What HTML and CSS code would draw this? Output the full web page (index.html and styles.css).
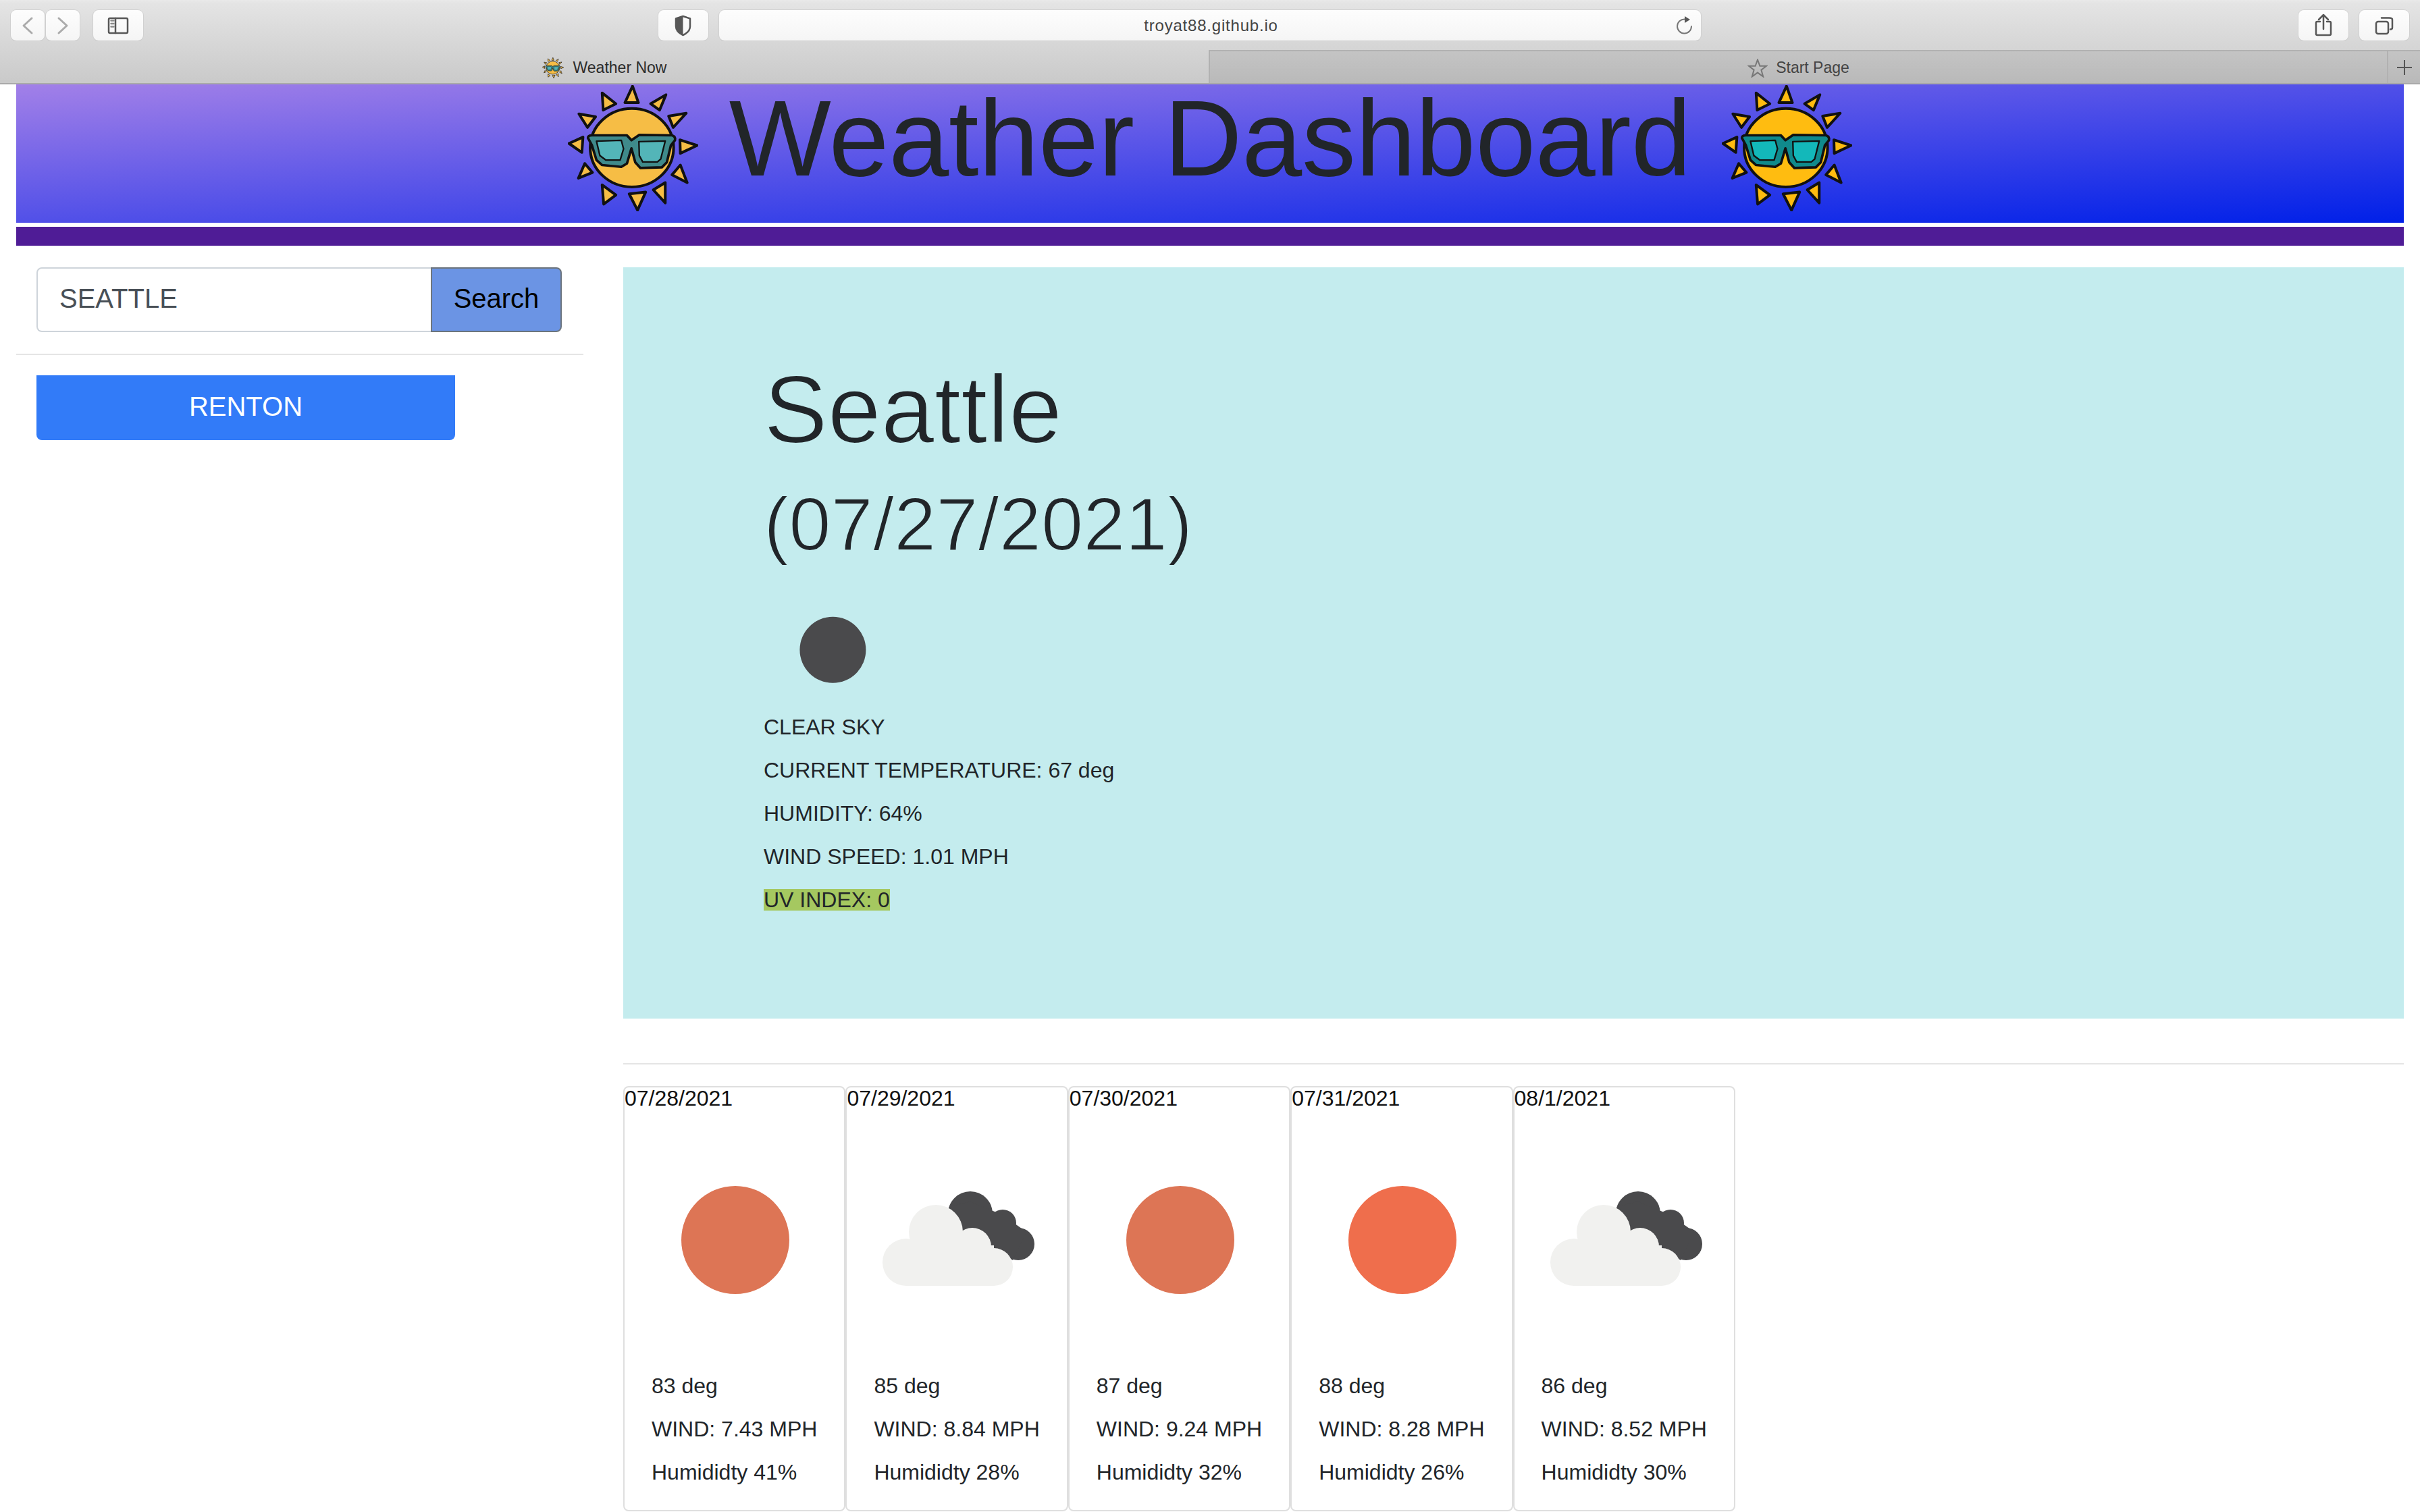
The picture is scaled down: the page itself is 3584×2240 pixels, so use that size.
FILE: index.html
```html
<!DOCTYPE html>
<html lang="en">
<head>
<meta charset="utf-8">
<title>Weather Now</title>
<link rel="stylesheet" href="styles.css">
</head>
<body>
<svg class="defs" xmlns="http://www.w3.org/2000/svg">
  <symbol id="sun" viewBox="63 17 578 560">
    <g class="sun-rays">
      <path d="M350 22L376 95L316 95Z"/>
      <path d="M498 60L470 128L430 100Z"/>
      <path d="M588 142L530 205L510 155Z"/>
      <path d="M636 285L562 320L560 260Z"/>
      <path d="M562 372L592 450L525 415Z"/>
      <path d="M495 450L495 540L442 482Z"/>
      <path d="M372 572L335 500L408 492Z"/>
      <path d="M215 460L276 505L222 545Z"/>
      <path d="M138 365L172 405L110 430Z"/>
      <path d="M68 276L130 248L125 316Z"/>
      <path d="M112 145L186 158L150 205Z"/>
      <path d="M215 52L276 100L220 128Z"/>
      <ellipse cx="347" cy="295" rx="185" ry="174"/>
    </g>
    <path class="sun-frame" d="M152 252Q152 240 170 240L325 240L345 262L380 238L525 240Q542 245 538 262L520 285L502 360L480 382L385 385L362 360L345 298L325 365L300 380L215 372L190 350L170 285Z"/>
    <path class="sun-lens" d="M190 266L300 262L310 300L295 350L232 350L205 330Z"/>
    <path class="sun-lens" d="M378 268L495 265L475 345L460 358L395 358L380 330Z"/>
  </symbol>
  <symbol id="clear" viewBox="4 0 325 220">
    <circle cx="168" cy="117" r="80"/>
  </symbol>
  <symbol id="cloudy" viewBox="4 0 325 220">
    <g class="cloud-back">
      <circle cx="187" cy="78" r="33"/>
      <circle cx="235" cy="92" r="20"/>
      <circle cx="258" cy="123" r="24"/>
      <path d="M155 68L187 60L235 80L270 105L250 147L218 128L178 103Z"/>
    </g>
    <g class="cloud-front">
      <circle cx="92" cy="150" r="35"/>
      <circle cx="136" cy="105" r="40"/>
      <circle cx="190" cy="127" r="28"/>
      <circle cx="222" cy="157" r="28"/>
      <rect x="92" y="125" width="130" height="60"/>
    </g>
  </symbol>
</svg>

<div class="chrome">
  <div class="toolbar">
    <div class="tool tool-nav">
      <svg viewBox="0 0 50 45" class="tool-icon"><path class="ic-faint" d="M31 12L19 23L31 34"/></svg>
    </div>
    <div class="tool tool-nav tool-next">
      <svg viewBox="0 0 50 45" class="tool-icon"><path class="ic-faint" d="M19 12L31 23L19 34"/></svg>
    </div>
    <div class="tool tool-wide tool-sidebar">
      <svg viewBox="0 0 74 45" class="tool-icon">
        <rect class="ic" x="23" y="12" width="28" height="22" rx="2"/>
        <path class="ic" d="M33 12V34"/>
        <path class="ic-thin" d="M26.5 15.5H30.5M26.5 20H30.5M26.5 24.500H30.5"/>
      </svg>
    </div>
    <div class="tool tool-wide tool-shield">
      <svg viewBox="0 0 74 45" class="tool-icon">
        <path class="ic-fill" d="M36.500 9L26 12.500V24C26 31 31 34.500 36.500 37Z"/>
        <path class="ic" d="M36.500 9L47 12.500V24C47 31 42 34.500 36.500 37C31 34.500 26 31 26 24V12.500Z"/>
      </svg>
    </div>
    <div class="address">
      <span></span>
      <span class="address-text">troyat88.github.io</span>
      <svg viewBox="0 0 40 45" class="reload">
        <path class="ic-reload" d="M21 13.500A10.500 10.500 0 1 0 31 24"/>
        <path class="ic-fill" d="M21 9L29 14L21 19Z"/>
      </svg>
    </div>
    <div class="tool tool-wide tool-share">
      <svg viewBox="0 0 74 45" class="tool-icon">
        <path class="ic" d="M32 17H28Q26 17 26 19V35Q26 37 28 37H46Q48 37 48 35V19Q48 17 46 17H42"/>
        <path class="ic" d="M37 28V7M30 14L37 7L44 14"/>
      </svg>
    </div>
    <div class="tool tool-wide tool-tabs">
      <svg viewBox="0 0 74 45" class="tool-icon">
        <rect class="ic" x="25" y="17" width="18" height="18" rx="3"/>
        <path class="ic" d="M33 11.500H44Q49 11.500 49 14V26Q49 28.500 46 28.500"/>
      </svg>
    </div>
  </div>
  <div class="tabs">
    <div class="tab tab-active">
      <svg class="tab-favicon sun-muted"><use href="#sun"/></svg>
      <span>Weather Now</span>
    </div>
    <div class="tab tab-idle">
      <svg viewBox="0 0 30 28" class="tab-star"><path d="M15 1.500L18.400 10.800H28L20.400 16.600L23.200 26.500L15 20.600L6.800 26.500L9.600 16.600L2 10.800H11.600Z"/></svg>
      <span>Start Page</span>
    </div>
    <div class="tab-add">
      <svg viewBox="0 0 24 24" class="tab-plus"><path d="M12 1V23M1 12H23"/></svg>
    </div>
  </div>
</div>

<div class="page">
  <header class="banner">
    <svg class="banner-sun sun-muted"><use href="#sun"/></svg>
    <h1 class="banner-title">Weather Dashboard</h1>
    <svg class="banner-sun sun-bright"><use href="#sun"/></svg>
  </header>
  <div class="rule-bar"></div>

  <div class="layout">
    <aside class="sidebar">
      <form class="search">
        <input class="search-input" type="text" value="SEATTLE" aria-label="City">
        <button class="search-btn" type="button">Search</button>
      </form>
      <hr class="divider">
      <button class="city-btn" type="button">RENTON</button>
    </aside>

    <main class="content">
      <section class="today">
        <h2 class="today-city">Seattle</h2>
        <p class="today-date">(07/27/2021)</p>
        <svg class="today-icon"><use href="#clear"/></svg>
        <p class="line">CLEAR SKY</p>
        <p class="line">CURRENT TEMPERATURE: 67 deg</p>
        <p class="line">HUMIDITY: 64%</p>
        <p class="line">WIND SPEED: 1.01 MPH</p>
        <p class="line"><span class="uv">UV INDEX: 0</span></p>
      </section>
      <hr class="divider divider-wide">
      <div class="forecast">
        <article class="card">
          <div class="card-date">07/28/2021</div>
          <svg class="card-icon sun-a"><use href="#clear"/></svg>
          <div class="card-body">
            <p class="line">83 deg</p>
            <p class="line">WIND: 7.43 MPH</p>
            <p class="line">Humididty 41%</p>
          </div>
        </article>
        <article class="card">
          <div class="card-date">07/29/2021</div>
          <svg class="card-icon"><use href="#cloudy"/></svg>
          <div class="card-body">
            <p class="line">85 deg</p>
            <p class="line">WIND: 8.84 MPH</p>
            <p class="line">Humididty 28%</p>
          </div>
        </article>
        <article class="card">
          <div class="card-date">07/30/2021</div>
          <svg class="card-icon sun-a"><use href="#clear"/></svg>
          <div class="card-body">
            <p class="line">87 deg</p>
            <p class="line">WIND: 9.24 MPH</p>
            <p class="line">Humididty 32%</p>
          </div>
        </article>
        <article class="card">
          <div class="card-date">07/31/2021</div>
          <svg class="card-icon sun-b"><use href="#clear"/></svg>
          <div class="card-body">
            <p class="line">88 deg</p>
            <p class="line">WIND: 8.28 MPH</p>
            <p class="line">Humididty 26%</p>
          </div>
        </article>
        <article class="card">
          <div class="card-date">08/1/2021</div>
          <svg class="card-icon"><use href="#cloudy"/></svg>
          <div class="card-body">
            <p class="line">86 deg</p>
            <p class="line">WIND: 8.52 MPH</p>
            <p class="line">Humididty 30%</p>
          </div>
        </article>
      </div>
    </main>
  </div>
</div>
</body>
</html>
```
FILE: styles.css
```css
* { box-sizing: border-box; }
html, body { margin: 0; padding: 0; height: 2240px; overflow: hidden; background: #fff; }
body { font-family: "Liberation Sans", Arial, sans-serif; font-size: 32px; color: #212529; }
.defs { display: none; }

/* Browser chrome */
.chrome {
  height: 125px;
  background: linear-gradient(180deg, #e9e9e9 0, #e4e4e4 4%, #c9c9c9 100%);
  box-shadow: inset 0 -2px 0 #a9a9a9;
}
.toolbar { height: 74px; padding: 15px 16px 0; display: flex; align-items: flex-start; }
.tool {
  height: 45px;
  border-radius: 8px;
  background: linear-gradient(180deg, #fdfdfd, #f5f5f5);
  box-shadow: 0 0 0 1px #d0d0d0, 0 1px 0 #b8b8b8;
  flex: none;
}
.tool-nav { width: 50px; }
.tool-next { margin-left: 2px; }
.tool-wide { width: 74px; }
.tool-sidebar { margin-left: 20px; }
.tool-shield { margin-left: 763px; }
.tool-share { margin-left: auto; }
.tool-tabs { margin-left: 16px; }
.tool-icon { display: block; width: 100%; height: 100%; }
.ic, .ic-faint, .ic-thin, .ic-reload { fill: none; stroke-linecap: round; stroke-linejoin: round; }
.ic { stroke: #575757; stroke-width: 2.500; }
.ic-faint { stroke: #ababab; stroke-width: 3; }
.ic-thin { stroke: #8a8a8a; stroke-width: 2.500; }
.ic-reload { stroke: #777; stroke-width: 2; }
.ic-fill { fill: #575757; }
.address {
  width: 1454px;
  height: 45px;
  margin-left: 16px;
  border-radius: 8px;
  background: linear-gradient(180deg, #fdfdfd, #f5f5f5);
  box-shadow: 0 0 0 1px #d0d0d0, 0 1px 0 #b0b0b0;
  display: grid;
  grid-template-columns: 1fr auto 1fr;
  align-items: center;
  flex: none;
}
.address-text { font-size: 24px; letter-spacing: .8px; color: #444; padding: 1px 0 0 3px; }
.reload { width: 40px; height: 45px; margin-right: 5px; justify-self: end; }

.tabs { height: 51px; display: flex; }
.tab { display: flex; align-items: center; justify-content: center; font-size: 23px; padding-top: 2px; }
.tab-active { width: 1790px; color: #2c2c2c; gap: 14px; }
.tab-idle {
  width: 1745px;
  gap: 12px;
  color: #444;
  background: linear-gradient(180deg, #c4c4c4, #b9b9b9);
  border-top: 2px solid #b1b1b1;
  border-left: 2px solid #b1b1b1;
  margin-bottom: 2px;
}
.tab-favicon { width: 32px; height: 31px; }
.tab-star { width: 30px; height: 28px; fill: none; stroke: #777; stroke-width: 2; }
.tab-add {
  flex: 1;
  background: linear-gradient(180deg, #c4c4c4, #b9b9b9);
  border-top: 2px solid #b1b1b1;
  border-left: 2px solid #b1b1b1;
  margin-bottom: 2px;
  display: flex;
  align-items: center;
  justify-content: center;
}
.tab-plus { width: 24px; height: 24px; fill: none; stroke: #555; stroke-width: 2; }

/* Page */
.page { padding: 0 24px; }
.banner {
  height: 205px;
  display: flex;
  justify-content: center;
  align-items: flex-start;
  gap: 46px;
  background: linear-gradient(to bottom right, #a280e8, #0020e8);
}
.banner-title {
  margin: 0;
  font-size: 160px;
  font-weight: 400;
  line-height: 160px;
  letter-spacing: -.25px;
  white-space: nowrap;
  color: #212529;
}
.banner-sun { width: 193px; height: 187px; margin-top: 1px; flex: none; }
.sun-rays { fill: var(--sun-body); stroke: #111; stroke-width: 12; stroke-linejoin: round; }
.sun-frame { fill: var(--sun-frame); stroke: #111; stroke-width: 11; stroke-linejoin: round; }
.sun-lens { fill: var(--sun-lens); stroke: #111; stroke-width: 7; stroke-linejoin: round; }
.sun-muted { --sun-body: #f6bd45; --sun-frame: #3f8a8b; --sun-lens: #53b5b8; }
.sun-bright { --sun-body: #ffbc10; --sun-frame: #108a8c; --sun-lens: #13b8ba; }
.rule-bar { height: 28px; margin-top: 6px; background: #4f1c96; }

.layout { display: flex; align-items: flex-start; padding-top: 32px; }
.sidebar { width: 840px; flex: none; margin-right: 59px; }
.search { display: flex; margin: 0 30px; height: 96px; }
.search-input {
  width: 584px;
  height: 96px;
  padding: 0 32px 3px;
  border: 2px solid #ced4da;
  border-right: 0;
  border-radius: 8px 0 0 8px;
  font: 40px "Liberation Sans", Arial, sans-serif;
  color: #495057;
  background: #fff;
}
.search-btn {
  width: 194px;
  height: 96px;
  padding: 0 0 4px;
  border: 2px solid #6c757d;
  border-radius: 0 8px 8px 0;
  background: #6b94e4;
  color: #000;
  font: 40px "Liberation Sans", Arial, sans-serif;
}
.divider { height: 2px; margin: 32px 0 30px; border: 0; background: #e5e5e5; }
.city-btn {
  display: block;
  width: 620px;
  height: 96px;
  margin-left: 30px;
  padding: 0 0 4px;
  border: 0;
  border-radius: 0 0 8px 8px;
  background: #327bf8;
  color: #fff;
  font: 40px "Liberation Sans", Arial, sans-serif;
}

.content { flex: 1; min-width: 0; }
.today { padding: 127px 208px 136px; background: #c4ecee; }
.today-city { margin: 0 0 19px; font-size: 142px; font-weight: 400; line-height: 168px; -webkit-text-stroke: 2px #c4ecee; }
.today-date { margin: 0 0 47px; font-size: 112px; line-height: 134px; -webkit-text-stroke: 2px #c4ecee; }
.today-icon { display: block; width: 199px; height: 135px; margin: 0 0 27px 2px; fill: #4a4a4c; }
.line { margin: 0 0 16px; line-height: 48px; white-space: nowrap; }
.uv { display: inline-block; line-height: 32px; background: #a5c860; }
.divider-wide { margin: 66px 0 32px; }

.forecast { display: flex; }
.card { width: 329.4px; flex: none; border: 2px solid #dfdfdf; border-radius: 8px; }
.card-date { line-height: 32px; color: #111; }
.card-icon { display: block; width: 325px; height: 220px; margin-top: 77px; }
.card-body { padding: 89px 40px 16px; }
.sun-a { fill: #dd7555; }
.sun-b { fill: #ef6e4c; }
.cloud-back { fill: #4a4a4c; }
.cloud-front { fill: #f1f1ef; }
```
